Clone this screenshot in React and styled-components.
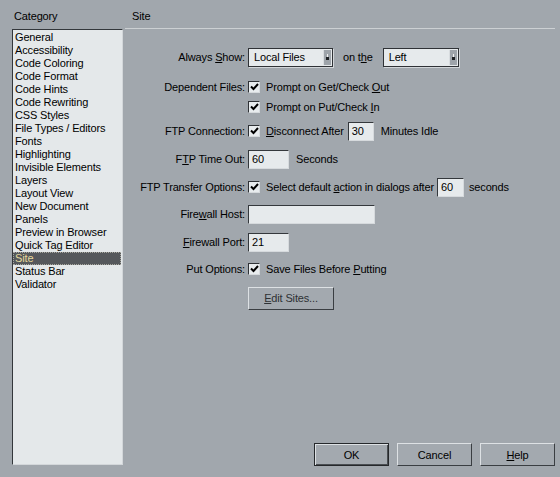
import React from "react";
import styled, { createGlobalStyle } from "styled-components";

const Global = createGlobalStyle`
  html, body {
    margin: 0;
    padding: 0;
    background: #a1a7ad;
  }
  body {
    font-family: "Liberation Sans", Arial, sans-serif;
    font-size: 11px;
    letter-spacing: -0.15px;
    color: #000;
  }
`;

const Dialog = styled.div`
  width: 560px;
  height: 477px;
  display: flex;
  background: #a1a7ad;
  overflow: hidden;
`;

const Sidebar = styled.div`
  width: 124px;
  padding: 0 1px 12px 12px;
  box-sizing: border-box;
  display: flex;
  flex-direction: column;
`;

const Heading = styled.div`
  height: 29px;
  box-sizing: border-box;
  padding: 10px 0 0 ${(p) => p.$indent || 2}px;
  line-height: 13px;
`;

const ListBox = styled.div`
  flex: 1;
  background: #e4e8ea;
  border-top: 1px solid #33373b;
  border-left: 1px solid #33373b;
  border-right: 1px solid #d3d7da;
  border-bottom: 1px solid #d3d7da;
  padding: 1px 1px 0 0;
`;

const ListItem = styled.div`
  height: 13px;
  line-height: 13px;
  padding-left: 2px;
  white-space: nowrap;
  box-sizing: border-box;
  background: ${(p) => (p.$selected ? "#55585c" : "transparent")};
  color: ${(p) => (p.$selected ? "#e6d89c" : "#000")};
  outline: ${(p) => (p.$selected ? "1px dotted #a8a8a0" : "none")};
  outline-offset: -1px;
`;

const Panel = styled.div`
  flex: 1;
  display: flex;
  flex-direction: column;
  padding: 0 5px 11px 1px;
`;

const PanelHead = styled(Heading)`
  border-bottom: 1px solid #ccd0d3;
`;

const Form = styled.div`
  display: flex;
  flex-direction: column;
  padding-top: 18px;
`;

const Row = styled.div`
  display: flex;
  align-items: center;
  height: 20px;
  margin-top: ${(p) => p.$gap || 0}px;
`;

const Label = styled.div`
  width: 120px;
  margin-right: 3px;
  text-align: right;
  white-space: nowrap;
`;

const Text = styled.span`
  white-space: nowrap;
  margin-left: ${(p) => p.$ml || 0}px;
  margin-right: ${(p) => p.$mr || 0}px;
`;

const Select = styled.div`
  position: relative;
  width: ${(p) => p.$w}px;
  height: 19px;
  box-sizing: border-box;
  background: #e6eaec;
  border: 1px solid #2f3236;
  box-shadow: 1px 1px 0 #d2d6d9;
  line-height: 17px;
  padding-left: 5px;
`;

const SelectArrow = styled.div`
  position: absolute;
  top: 1px;
  right: 1px;
  bottom: 1px;
  width: 7px;
  background: #9ea4aa;
  border-left: 1px solid #d8dcdf;
  display: flex;
  align-items: center;
  justify-content: center;
`;

const Check = styled.div`
  width: 12px;
  height: 12px;
  box-sizing: border-box;
  background: #e8ecee;
  border-top: 1px solid #2f3236;
  border-left: 1px solid #2f3236;
  border-right: 1px solid #d6dadd;
  border-bottom: 1px solid #d6dadd;
  display: flex;
  align-items: center;
  justify-content: center;
  margin-right: 6px;
`;

const Field = styled.div`
  width: ${(p) => p.$w}px;
  height: 19px;
  box-sizing: border-box;
  background: #e6eaec;
  border-top: 1px solid #34383c;
  border-left: 1px solid #34383c;
  border-right: 1px solid #d6dadd;
  border-bottom: 1px solid #d6dadd;
  line-height: 17px;
  padding-left: 3px;
  margin-left: ${(p) => p.$ml || 0}px;
  margin-right: ${(p) => p.$mr || 0}px;
`;

const Button = styled.div`
  width: ${(p) => p.$w || 75}px;
  height: 23px;
  box-sizing: border-box;
  background: #a3a9af;
  border: 1px solid;
  border-color: ${(p) =>
    p.$default ? "#25282b" : "#dde1e4 #3a3e42 #3a3e42 #dde1e4"};
  box-shadow: ${(p) =>
    p.$default ? "inset 1px 1px 0 #dde1e4, inset -1px -1px 0 #4a4e52" : "none"};
  display: flex;
  align-items: center;
  justify-content: center;
  color: ${(p) => (p.$dim ? "#2e3134" : "#000")};
`;

const Footer = styled.div`
  margin-top: auto;
  display: flex;
  justify-content: flex-end;
  gap: 8px;
`;

const U = styled.span`
  text-decoration: underline;
  text-underline-offset: 1px;
`;

const Indent = styled.div`
  margin-left: 123px;
`;

const categories = [
  "General",
  "Accessibility",
  "Code Coloring",
  "Code Format",
  "Code Hints",
  "Code Rewriting",
  "CSS Styles",
  "File Types / Editors",
  "Fonts",
  "Highlighting",
  "Invisible Elements",
  "Layers",
  "Layout View",
  "New Document",
  "Panels",
  "Preview in Browser",
  "Quick Tag Editor",
  "Site",
  "Status Bar",
  "Validator",
];

function Tick() {
  return (
    <svg width="9" height="8" viewBox="0 0 9 8">
      <path d="M1 3.5 L3.5 6 L8 1" fill="none" stroke="#000" strokeWidth="2" />
    </svg>
  );
}

function Dropdown({ w, value }) {
  return (
    <Select $w={w}>
      {value}
      <SelectArrow>
        <svg width="5" height="7" viewBox="0 0 5 7">
          <rect x="2" y="0" width="1" height="3" fill="#f0f0f0" />
          <rect x="1" y="3" width="3" height="3" fill="#202326" />
        </svg>
      </SelectArrow>
    </Select>
  );
}

export default function App() {
  return (
    <>
      <Global />
      <Dialog>
        <Sidebar>
          <Heading>Category</Heading>
          <ListBox>
            {categories.map((c) => (
              <ListItem key={c} $selected={c === "Site"}>
                {c}
              </ListItem>
            ))}
          </ListBox>
        </Sidebar>

        <Panel>
          <PanelHead $indent={7}>Site</PanelHead>
          <Form>
            <Row>
              <Label>
                Always <U>S</U>how:
              </Label>
              <Dropdown w={85} value="Local Files" />
              <Text $ml={10} $mr={10}>
                on t<U>h</U>e
              </Text>
              <Dropdown w={76} value="Left" />
            </Row>

            <Row $gap={10}>
              <Label>Dependent Files:</Label>
              <Check>
                <Tick />
              </Check>
              <Text>
                Prompt on Get/Check <U>O</U>ut
              </Text>
            </Row>
            <Row>
              <Indent />
              <Check>
                <Tick />
              </Check>
              <Text>
                Prompt on Put/Check <U>I</U>n
              </Text>
            </Row>

            <Row $gap={4}>
              <Label>FTP Connection:</Label>
              <Check>
                <Tick />
              </Check>
              <Text>
                <U>D</U>isconnect After
              </Text>
              <Field $w={26} $ml={4} $mr={7}>
                30
              </Field>
              <Text>Minutes Idle</Text>
            </Row>

            <Row $gap={8}>
              <Label>
                F<U>T</U>P Time Out:
              </Label>
              <Field $w={41} $mr={7}>
                60
              </Field>
              <Text>Seconds</Text>
            </Row>

            <Row $gap={8}>
              <Label>FTP Transfer Options:</Label>
              <Check>
                <Tick />
              </Check>
              <Text>
                Select default <U>a</U>ction in dialogs after
              </Text>
              <Field $w={27} $ml={3} $mr={5}>
                60
              </Field>
              <Text>seconds</Text>
            </Row>

            <Row $gap={7}>
              <Label>
                Fire<U>w</U>all Host:
              </Label>
              <Field $w={127} />
            </Row>

            <Row $gap={8}>
              <Label>
                <U>F</U>irewall Port:
              </Label>
              <Field $w={41}>21</Field>
            </Row>

            <Row $gap={7}>
              <Label>Put Options:</Label>
              <Check>
                <Tick />
              </Check>
              <Text>
                Save Files Before <U>P</U>utting
              </Text>
            </Row>

            <Row $gap={9}>
              <Indent />
              <Button $w={86} $dim>
                <span>
                  <U>E</U>dit Sites...
                </span>
              </Button>
            </Row>
          </Form>

          <Footer>
            <Button $default>OK</Button>
            <Button>Cancel</Button>
            <Button>
              <span>
                <U>H</U>elp
              </span>
            </Button>
          </Footer>
        </Panel>
      </Dialog>
    </>
  );
}
